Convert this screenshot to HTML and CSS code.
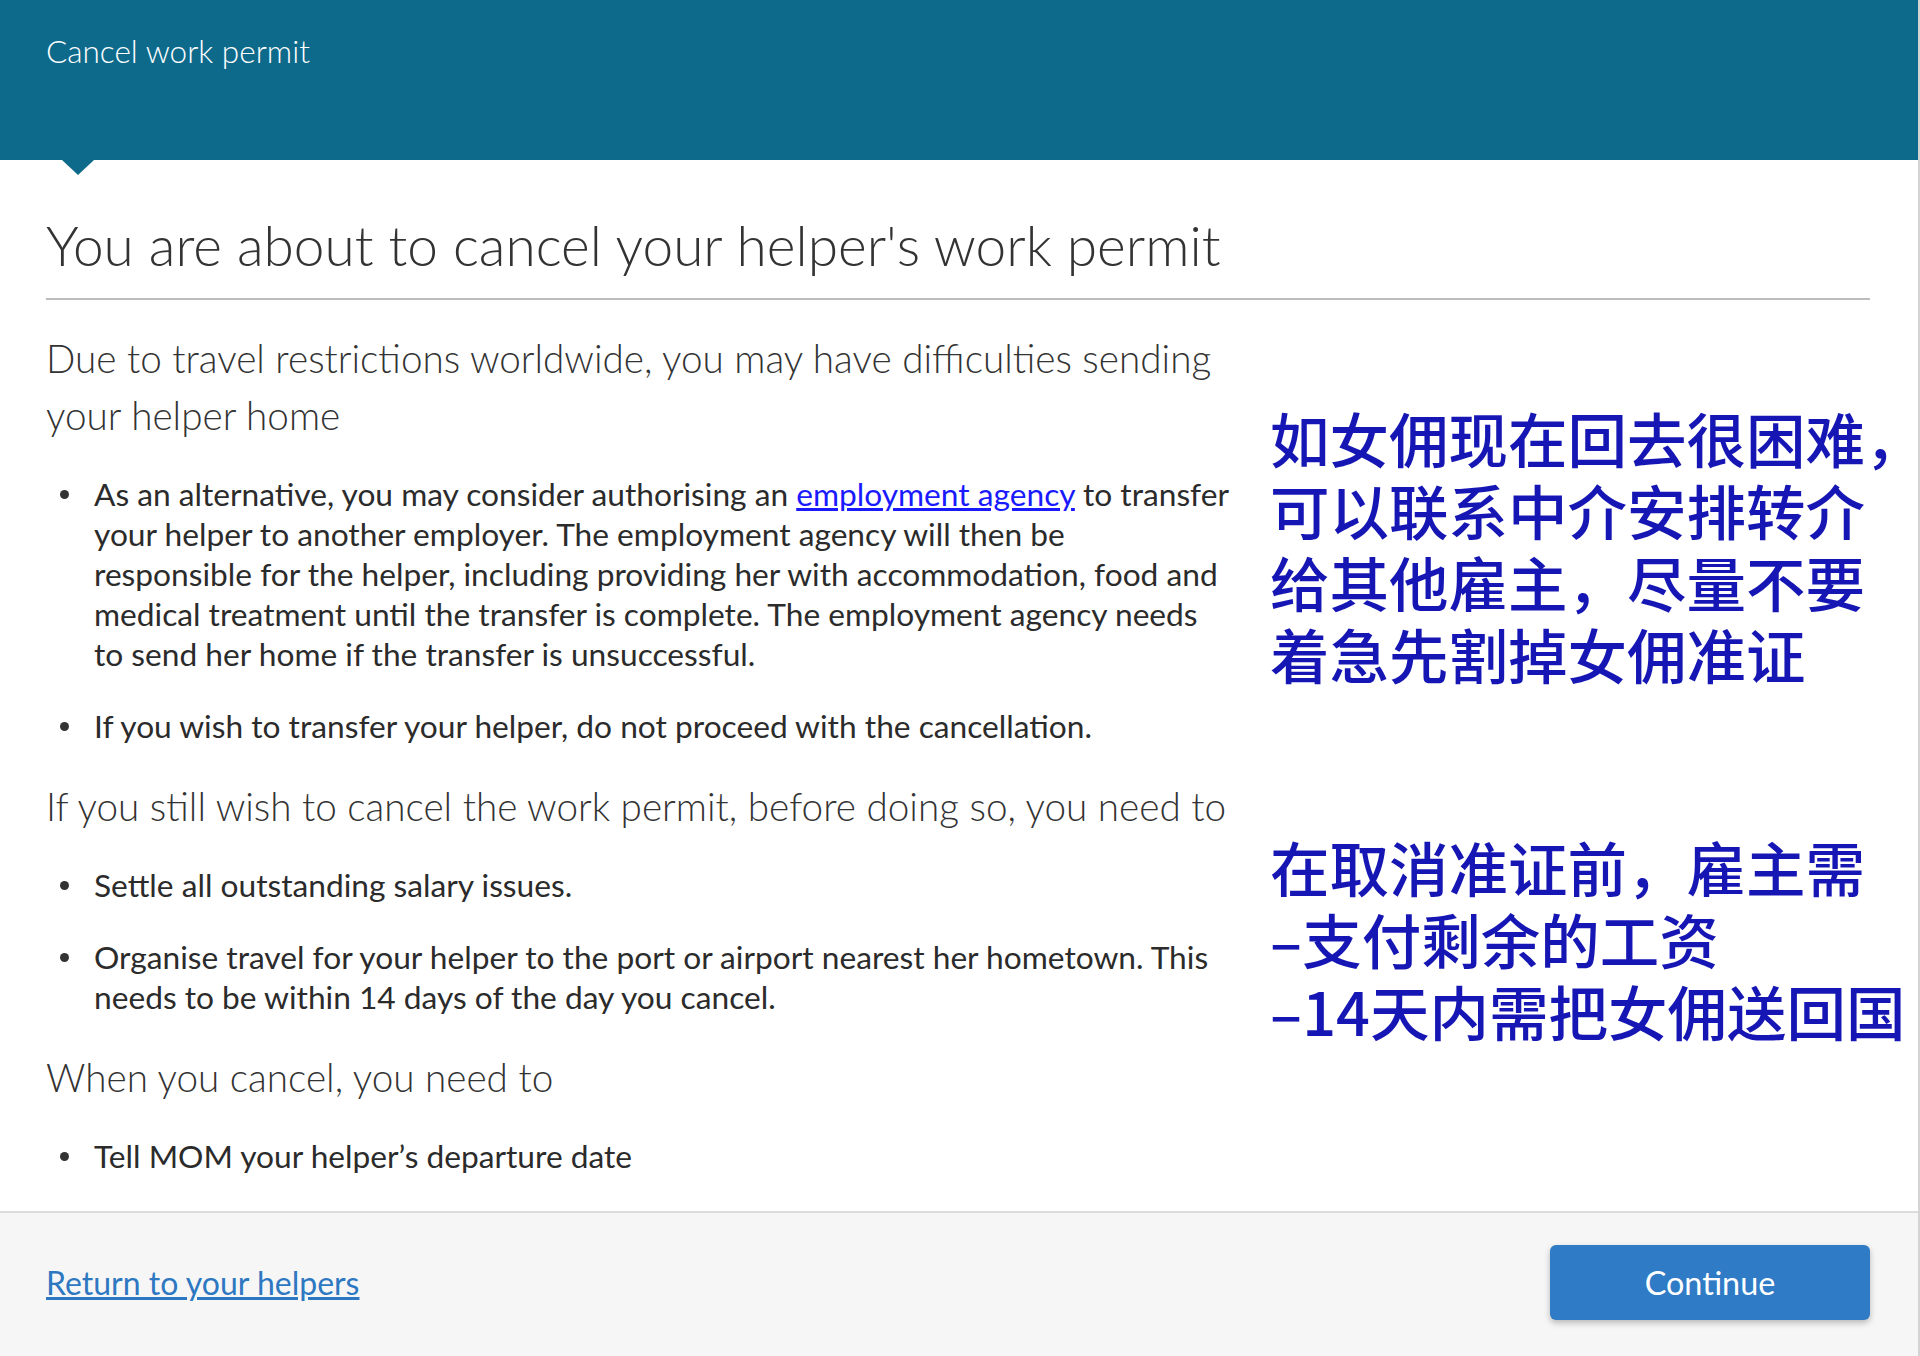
FILE: index.html
```html
<!DOCTYPE html>
<html lang="en">
<head>
  <meta charset="UTF-8">
  <meta name="viewport" content="width=device-width, initial-scale=1">
  <title>Cancel work permit</title>
  <link rel="stylesheet" href="styles.css">
</head>
<body>

  <div class="page">
    <header class="topbar">
      <div class="topbar-title">Cancel work permit</div>
    </header>

    <main class="content">
      <h1 class="page-title">You are about to cancel your helper's work permit</h1>

      <section class="block">
        <div class="block-text">
          <p class="lead">Due to travel restrictions worldwide, you may have difficulties sending your helper home</p>
          <ul class="points">
            <li>As an alternative, you may consider authorising an <a href="#" class="inline-link">employment agency</a> to transfer your helper to another employer. The employment agency will then be<br>responsible for the helper, including providing her with accommodation, food and medical treatment until the transfer is complete. The employment agency needs to send her home if the transfer is unsuccessful.</li>
            <li>If you wish to transfer your helper, do not proceed with the cancellation.</li>
          </ul>
        </div>
        <div class="note note-first">如女佣现在回去很困难<span class="half-punct">，</span><br>可以联系中介安排转介<br>给其他雇主，尽量不要<br>着急先割掉女佣准证</div>
      </section>

      <section class="block">
        <div class="block-text">
          <p class="lead">If you still wish to cancel the work permit, before doing so, you need to</p>
          <ul class="points">
            <li>Settle all outstanding salary issues.</li>
            <li>Organise travel for your helper to the port or airport nearest her hometown. This needs to be within 14 days of the day you cancel.</li>
          </ul>
          <p class="lead">When you cancel, you need to</p>
          <ul class="points">
            <li>Tell MOM your helper’s departure date</li>
          </ul>
        </div>
        <div class="note note-second">在取消准证前，雇主需<br>–支付剩余的工资<br>–14天内需把女佣送回国</div>
      </section>
    </main>

    <footer class="actions">
      <a href="#" class="back-link">Return to your helpers</a>
      <button class="btn-continue">Continue</button>
    </footer>
  </div>

</body>
</html>
```

FILE: styles.css
```css
body {
  margin: 0;
  background-color: #d4d4d4;
  font-family: Lato, "Open Sans", sans-serif;
  color: #333;
}

.page {
  width: 1918px;
  height: 1356px;
  background: #ffffff;
  display: flex;
  flex-direction: column;
}

/* blue title strip with the little pointer under it */
.topbar {
  position: relative;
  flex-shrink: 0;
  height: 160px;
  padding: 0 46px;
  background: #0e6a8b;
  box-sizing: border-box;
}

.topbar::after {
  content: "";
  position: absolute;
  left: 62px;
  top: 100%;
  border-left: 16px solid transparent;
  border-right: 16px solid transparent;
  border-top: 15px solid #0e6a8b;
}

.topbar-title {
  padding-top: 32px;
  color: #ffffff;
  font-size: 31.5px;
  font-weight: 300;
}

.content {
  flex: 1;
  min-height: 0;
  padding: 0 48px 0 46px;
}

.page-title {
  margin: 52px 0 0;
  padding-bottom: 20px;
  border-bottom: 2px solid #bdbdbd;
  font-size: 55px;
  font-weight: 300;
  line-height: 66px;
  color: #333;
}

/* text on the left, notes on the right */
.block {
  display: grid;
  grid-template-columns: 1186px 1fr;
  gap: 38px;
  margin-right: -48px;
}

.lead {
  margin: 0;
  font-size: 38.7px;
  font-weight: 300;
  line-height: 57px;
}

.block:first-of-type .lead {
  margin-top: 30px;
}

.points {
  margin: 30px 0 0;
  padding-left: 48px;
  list-style: none;
  font-size: 31.7px;
  line-height: 40px;
  color: #2b2b2b;
}

.points li {
  position: relative;
  margin-bottom: 32px;
}

.points li::before {
  content: "";
  position: absolute;
  left: -34px;
  top: 16px;
  width: 9px;
  height: 9px;
  border-radius: 50%;
  background: #333;
}

.inline-link {
  color: #1a1aff;
}

.note {
  color: #1616b4;
  font-family: "Noto Sans CJK SC", sans-serif;
  font-size: 59.5px;
  font-weight: 500;
  line-height: 72px;
  white-space: nowrap;
}

/* trailing comma only takes half a cell */
.half-punct {
  font-feature-settings: "halt";
}

.note-first {
  margin-top: 101px;
}

.note-second {
  margin-top: 52px;
}

.actions {
  flex-shrink: 0;
  height: 145px;
  padding: 0 48px 4px 46px;
  border-top: 2px solid #dcdcdc;
  background: #f6f6f6;
  display: flex;
  justify-content: space-between;
  align-items: center;
  box-sizing: border-box;
}

.back-link {
  color: #2e78c2;
  font-size: 32px;
}

.btn-continue {
  width: 320px;
  height: 75px;
  border: none;
  border-radius: 6px;
  background: #2f7bc6;
  color: #ffffff;
  font-family: Lato, sans-serif;
  font-size: 32.4px;
  box-shadow: 0 3px 6px rgba(0, 0, 0, 0.25);
  cursor: pointer;
}
```
